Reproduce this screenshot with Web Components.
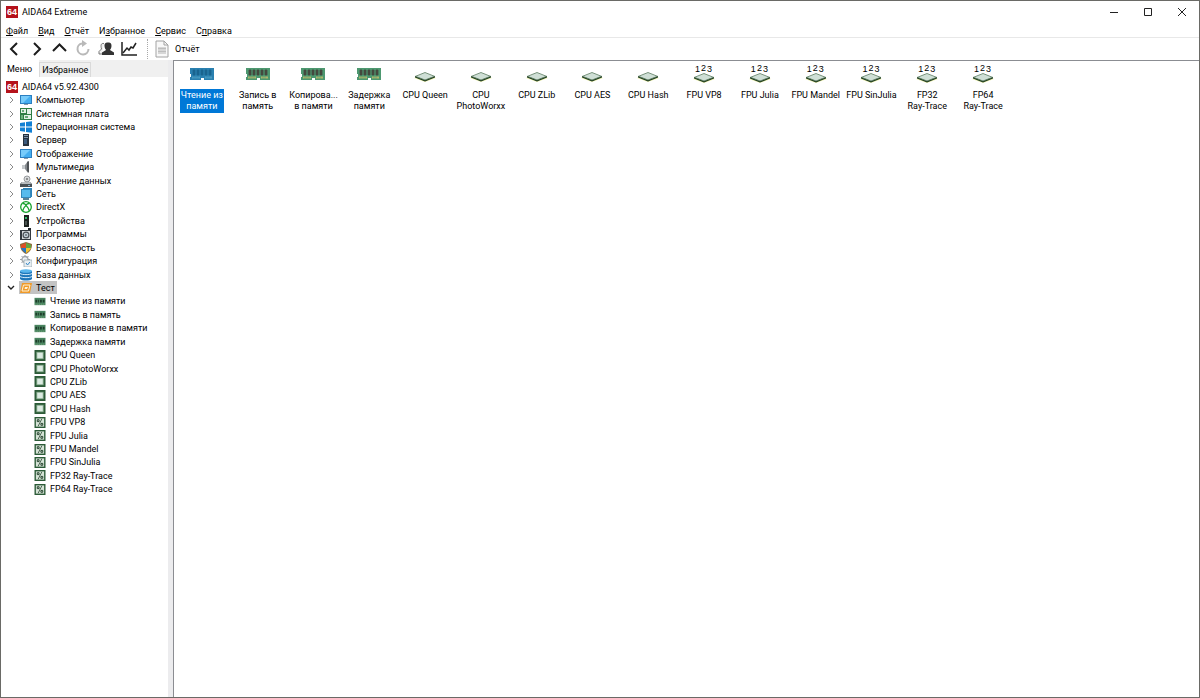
<!DOCTYPE html>
<html lang="ru">
<head>
<meta charset="utf-8">
<title>AIDA64 Extreme</title>
<style>
  html, body { height: 100%; margin: 0; }
  body { font: 9px/12px Roboto, "Open Sans", sans-serif; color: #000; background: #fff; }
</style>
</head>
<body>
<app-window></app-window>

<script>
const RAM = (board, chip, pin) => `
  <path d="M1 2H25V14H15V12H12V14H1V11H2V8H1Z" fill="${board}"/>
  <path d="M4 4h2v5H4zM8 4h2v5H8zM12 4h2v5h-2zM16 4h2v5h-2zM20 4h2v5h-2z" fill="${chip}" stroke="${chip}" stroke-width=".8"/>
  <path d="M3 10.500h8v2H3zM16 10.500h7v2h-7z" fill="${pin}"/>
  <path d="M5 10v3M7 10v3M9 10v3M18 10v3M20 10v3" stroke="${board}" stroke-width=".5"/>`;
const CHIP = `
  <path d="M2 12 13 7l11 5-11 4z" fill="#f0f2b4"/>
  <path d="M3 10v1.500l10 4 10-4V10z" fill="#1d3a1c"/>
  <path d="M3.500 10.300 13 6.500l9.500 3.800L13 14z" fill="#cfdfd6" stroke="#5d7c62" stroke-width=".8"/>`;

const ICONS = {
  logo: ["0 0 12 12", `<rect width="12" height="12" fill="#b5121b"/><text x="6" y="9" text-anchor="middle" font-family="Liberation Sans, sans-serif" font-size="9" font-weight="bold" fill="#fff">64</text>`],
  monitor: ["0 0 12 12", `<rect y="1" width="12" height="9" fill="#2b7fc1"/><path d="M1 2h10v7H1z" fill="#45aef0"/><path d="M1 2h9L3 9H1z" fill="#78cbfa"/><path d="M4 10h4v1H4z" fill="#8a9aa6"/>`],
  board: ["0 0 12 12", `<rect width="12" height="12" fill="#2f7d43"/><path d="M1 1h5v4H1zM7 1h4v5H7zM4 7h7v4H4z" fill="#e4f1e6"/><path d="M2 2h2v2H2zM5 8h3v2H5z" fill="#69a977"/><path d="M1 7h2v4H1z" fill="#6db17b"/>`],
  windows: ["0 0 12 12", `<path d="M0 2 5 1.300V5.600H0zM6 1.100 12 .3V5.600H6zM0 6.500H5v4.300L0 10zM6 6.500h6v5.300l-6-.8z" fill="#1280d4"/>`],
  server: ["0 0 12 12", `<path d="M3 0h6v12H3z" fill="#26323f"/><path d="M4 1h4v1H4zM4 3h4v1H4z" fill="#7d93ab"/><path d="M4 5h3v5H4z" fill="#3c5a7d"/>`],
  sound: ["0 0 12 12", `<path d="M2 4h3l3-4v12L5 8H2z" fill="#85898d"/><path d="M2 4h3v4H2z" fill="#c4c8cb"/><path d="M7 1l2-1v12l-2-2z" fill="#4e5256"/>`],
  disk: ["0 0 12 12", `<path d="M2 7h8l2 2v3H0V9z" fill="#4b5054"/><path d="M2 7h8l1 2H1z" fill="#b9bdc0"/><circle cx="7" cy="4" r="3" fill="#d8dadc" stroke="#96999c"/><circle cx="7" cy="4" r="1" fill="#777"/><path d="M8 10h2v1H8z" fill="#8ab8d8"/>`],
  network: ["0 0 12 12", `<path d="M3 0h9v9H3z" fill="#2a83bb"/><path d="M1 1h10v9H1z" fill="#3688b9"/><path d="M2 2h8v7H2z" fill="#57bbed"/><path d="M3 10h6v2H3z" fill="#5b8395"/>`],
  xbox: ["0 0 12 12", `<circle cx="6" cy="6" r="5.300" fill="#fff" stroke="#18a22d" stroke-width="1.300"/><path d="M2.500 10C3.200 7.500 4.500 5.500 6 4.400 7.500 5.500 8.800 7.500 9.500 10M3 2.500C4.500 2.500 5.500 3.500 6 4.200 6.500 3.500 7.500 2.500 9 2.500" fill="none" stroke="#18a22d" stroke-width="1.300"/>`],
  device: ["0 0 12 12", `<path d="M4 0h5v12H4z" fill="#1c211e"/><path d="M5 2h2v2H5z" fill="#35b96a"/><path d="M5 6h2v4H5z" fill="#4a5450"/>`],
  programs: ["0 0 12 12", `<path d="M0 2h11v10H0z" fill="#343a40"/><path d="M2 3h8v8H2z" fill="#d6dadd"/><circle cx="6" cy="7" r="3.500" fill="#4a5056"/><circle cx="6" cy="7" r="2.300" fill="#c5d1d8"/><circle cx="6" cy="7" r=".8" fill="#2f3439"/><path d="M8 0h3v2H8z" fill="#22272b"/>`],
  shield: ["0 0 12 12", `<path d="M6 0 12 2C12 7 10 10 6 12 2 10 0 7 0 2z" fill="#8e6b3a"/><path d="M6 1V6H1V3z" fill="#de4f26"/><path d="M6 1 11 3V6H6z" fill="#61a842"/><path d="M1 6H6V11C3 9 2 8 1 6z" fill="#2777c3"/><path d="M6 6H11C10 8 9 9 6 11z" fill="#f3c431"/>`],
  config: ["0 0 12 12", `<circle cx="5" cy="4.500" r="3" fill="#eef1f3" stroke="#a3a8ac" stroke-width="1.300"/><path d="M5 0v2M5 7v2M0 4.500h2M8 4.500h2M1.500 1l1.500 1.500M7 2.500 8.500 1M1.500 8 3 6.500" stroke="#9ba1a6"/><path d="M4 5h8v7H4z" fill="#e8eef2" stroke="#91a0ab" stroke-width=".7"/><path d="M6 8l1.500 2L10 7" fill="none" stroke="#3688c6"/>`],
  database: ["0 0 12 12", `<path d="M0 2h12v8c-2 2-10 2-12 0z" fill="#1e76ba"/><ellipse cx="6" cy="2" rx="6" ry="1.800" fill="#57b5ed"/><path d="M0 4.500c2 1.500 10 1.500 12 0M0 7.500c2 1.500 10 1.500 12 0" fill="none" stroke="#d2eafa"/>`],
  test: ["0 0 12 12", `<path d="M2 1h10l-2 10H0z" fill="#f09a28"/><path d="M3.500 3h6.500L8.500 9H2z" fill="none" stroke="#fff2d6"/><path d="M5 5h3L7 7H4.500z" fill="#fff2d6"/>`],
  ram: ["0 0 12 12", `<path d="M0 2h12v8H0z" fill="#4a8560"/><path d="M1 4h2v3H1zM4 4h1v3H4zM6 4h2v3H6zM9 4h2v3H9z" fill="#1e3c29"/><path d="M1 9h10" stroke="#7aa67f" stroke-dasharray="1"/>`],
  cpu: ["0 0 12 12", `<path d="M0 0h12v12H0z" fill="#2c5b38"/><path d="M2 2h8v8H2z" fill="#86ab8e"/><path d="M3 3h6v6H3z" fill="#dcebe2"/>`],
  fpu: ["0 0 12 12", `<path d="M0 0h12v12H0z" fill="#2c5b38"/><path d="M1.500 1.500h9v9h-9z" fill="#d5e3d6"/><path d="M4 10 8 2" stroke="#1b3a24" stroke-width=".8"/><path d="M3 3h2v2H3zM7 7h2v2H7z" fill="none" stroke="#1b3a24"/>`],
  ramSelected: ["0 0 26 16", RAM("#2a80b0", "#1a648f", "#4b9bc0")],
  ramBig: ["0 0 26 16", RAM("#4d9870", "#45493f", "#b0b569")],
  cpuBig: ["0 0 26 16", CHIP],
  back: ["0 0 18 18", `<path d="M12 3 6 9l6 6" fill="none" stroke="#1c1c1c" stroke-width="2"/>`],
  forward: ["0 0 18 18", `<path d="M6 3l6 6-6 6" fill="none" stroke="#1c1c1c" stroke-width="2"/>`],
  up: ["0 0 18 18", `<path d="M2 11 8.500 4.500 15 11" fill="none" stroke="#1c1c1c" stroke-width="2"/>`],
  refresh: ["0 0 18 18", `<path d="M8 3.500A5.500 5.500 0 1 0 14.500 9" fill="none" stroke="#b9b9b9" stroke-width="2"/><path d="M8 0v7l5-3.500z" fill="#b9b9b9"/>`],
  users: ["0 0 18 18", `<path d="M7 3.500C4 3 3.500 5 4.500 9L2 11.500V14H5" fill="#eee" stroke="#777"/><path d="M11 2.500C8 2.500 7.500 4 7.500 6C7.500 8 8.500 9 9 10L5 12.500V15H17V12.500L13 10C13.500 9 14.500 8 14.500 6C14.500 4 14 2.500 11 2.500z" fill="#333"/>`],
  chart: ["0 0 18 18", `<path d="M2 2V15H17" fill="none" stroke="#222" stroke-width="1.500"/><path d="M3 13 7 8l2 2 2-3 2 1 3-5" fill="none" stroke="#222" stroke-width="1.500"/>`],
  page: ["0 0 18 18", `<path d="M3 1h8l4 4v12H3z" fill="#f8f8f8" stroke="#a2a2a2"/><path d="M11 1v4h4" fill="none" stroke="#a2a2a2"/><path d="M5 7h8v7H5z" fill="#d6d6d6"/><path d="M5 8.500h8M5 11.500h8" stroke="#bdbdbd"/>`],
  minimize: ["0 0 10 10", `<path d="M1 5.500h8" stroke="#222"/>`],
  maximize: ["0 0 10 10", `<path d="M1.500 1.500h7v7h-7z" fill="none" stroke="#222"/>`],
  close: ["0 0 10 10", `<path d="M1 1l8 8M9 1 1 9" stroke="#222"/>`],
  closed: ["0 0 8 8", `<path d="M3 1l3 3-3 3" fill="none" stroke="#8a8a8a"/>`],
  open: ["0 0 8 8", `<path d="M1 2l3 3 3-3" fill="none" stroke="#222" stroke-width="1.400"/>`]
};

class ShadowElement extends HTMLElement {
  connectedCallback() {
    if (this.shadowRoot) return;
    this.attachShadow({ mode: "open" }).innerHTML = this.render();
  }
}

customElements.define("app-icon", class extends ShadowElement {
  render() {
    const [box, shapes] = ICONS[this.getAttribute("name")];
    return `<style>
      :host { display: block; flex: none; width: 12px; height: 12px; }
      svg { display: block; width: 100%; height: 100%; }
    </style><svg viewBox="${box}" aria-hidden="true">${shapes}</svg>`;
  }
});

customElements.define("title-bar", class extends ShadowElement {
  render() {
    return `<style>
      :host { display: flex; align-items: center; height: 22px; padding-left: 5px; }
      h1 { flex: 1; margin: 0 4px; font: inherit; }
      button { display: grid; place-items: center; width: 34px; height: 22px; border: 0; padding: 0; background: none; }
      button app-icon { width: 10px; height: 10px; }
    </style>
    <app-icon name="logo"></app-icon><h1><slot></slot></h1>
    <button aria-label="Свернуть"><app-icon name="minimize"></app-icon></button>
    <button aria-label="Развернуть"><app-icon name="maximize"></app-icon></button>
    <button aria-label="Закрыть"><app-icon name="close"></app-icon></button>`;
  }
});

customElements.define("menu-bar", class extends ShadowElement {
  render() {
    const items = ["<u>Ф</u>айл", "<u>В</u>ид", "<u>О</u>тчёт", "И<u>з</u>бранное", "<u>С</u>ервис", "С<u>п</u>равка"];
    return `<style>
      :host { display: block; }
      nav { display: flex; align-items: flex-end; gap: 10px; height: 14px; padding-left: 5px; border-bottom: 1px solid #e8e8e8; }
      button { border: 0; padding: 0; background: none; font: inherit; color: inherit; }
    </style><nav>${items.map(t => `<button>${t}</button>`).join("")}</nav>`;
  }
});

customElements.define("tool-bar", class extends ShadowElement {
  render() {
    const tools = [["back", "Назад"], ["forward", "Вперёд"], ["up", "Вверх"], ["refresh", "Обновить"], ["users", "Пользователи"], ["chart", "График"]];
    return `<style>
      :host { display: flex; align-items: center; height: 22px; padding-left: 1px; }
      button { display: flex; align-items: center; justify-content: center; gap: 4px; width: 23px; border: 0; padding: 0; background: none; font: inherit; color: inherit; }
      app-icon { width: 18px; height: 18px; }
      .rule { height: 20px; margin: 0 5px 0 7px; border-left: 1px dotted #a8a8a8; }
      .report { width: auto; }
    </style>
    ${tools.map(([i, t]) => `<button aria-label="${t}"><app-icon name="${i}"></app-icon></button>`).join("")}
    <span class="rule"></span>
    <button class="report"><app-icon name="page"></app-icon>Отчёт</button>`;
  }
});

customElements.define("tree-row", class extends ShadowElement {
  render() {
    const state = this.getAttribute("state");
    return `<style>
      :host { display: flex; align-items: center; min-height: 0; padding-left: 4px; white-space: nowrap; }
      :host([state]) { padding-left: 6px; }
      :host([leaf]) { padding-left: 32px; }
      button { display: block; flex: none; width: 8px; height: 8px; margin-right: 4px; border: 0; padding: 0; background: none; }
      button app-icon { width: 8px; height: 8px; }
      .item { display: flex; align-items: center; height: 13px; gap: 4px; padding: 0 2px 0 1px; }
      :host([selected]) .item { background: #c3c3c3; }
      :host([leaf]) .item app-icon { height: 11px; }
    </style>
    ${state ? `<button aria-label="Развернуть"><app-icon name="${state}"></app-icon></button>` : ""}
    <span class="item"><app-icon name="${this.getAttribute("icon")}"></app-icon><slot></slot></span>`;
  }
});

customElements.define("side-panel", class extends ShadowElement {
  render() {
    const groups = [["monitor", "Компьютер"], ["board", "Системная плата"], ["windows", "Операционная система"], ["server", "Сервер"], ["monitor", "Отображение"], ["sound", "Мультимедиа"], ["disk", "Хранение данных"], ["network", "Сеть"], ["xbox", "DirectX"], ["device", "Устройства"], ["programs", "Программы"], ["shield", "Безопасность"], ["config", "Конфигурация"], ["database", "База данных"]];
    const leaves = [["ram", "Чтение из памяти"], ["ram", "Запись в память"], ["ram", "Копирование в памяти"], ["ram", "Задержка памяти"], ["cpu", "CPU Queen"], ["cpu", "CPU PhotoWorxx"], ["cpu", "CPU ZLib"], ["cpu", "CPU AES"], ["cpu", "CPU Hash"], ["fpu", "FPU VP8"], ["fpu", "FPU Julia"], ["fpu", "FPU Mandel"], ["fpu", "FPU SinJulia"], ["fpu", "FP32 Ray-Trace"], ["fpu", "FP64 Ray-Trace"]];
    return `<style>
      :host { display: flex; flex-direction: column; background: #fff; }
      .tabs { display: flex; align-items: flex-end; height: 17px; background: #f0f0f0; }
      .tabs button { height: 15px; border: 1px solid #dadada; border-bottom: 0; padding: 0 2px; background: #f0f0f0; font: inherit; color: inherit; }
      .tabs button[aria-selected=true] { height: 17px; padding: 0 6px 1px 5px; border-color: #fff; background: #fff; }
      .tree { display: grid; grid-auto-rows: 1fr; height: 416px; margin-top: 3px; }
    </style>
    <div class="tabs" role="tablist"><button role="tab" aria-selected="true">Меню</button><button role="tab" aria-selected="false">Избранное</button></div>
    <div class="tree">
      <tree-row icon="logo">AIDA64 v5.92.4300</tree-row>
      ${groups.map(([i, t]) => `<tree-row state="closed" icon="${i}">${t}</tree-row>`).join("")}
      <tree-row state="open" icon="test" selected>Тест</tree-row>
      ${leaves.map(([i, t]) => `<tree-row leaf icon="${i}">${t}</tree-row>`).join("")}
    </div>`;
  }
});

customElements.define("test-tile", class extends ShadowElement {
  render() {
    return `<style>
      :host { display: flex; flex-direction: column; align-items: center; text-align: center; line-height: 11px; white-space: nowrap; }
      .picture { position: relative; display: flex; height: 26px; padding-top: 3px; box-sizing: border-box; }
      .picture app-icon { width: 26px; height: 16px; }
      .digits { position: absolute; inset: 2px 0 auto; font: 9px/9px "Liberation Sans", sans-serif; letter-spacing: 1px; }
      .digits span { position: relative; top: -1px; }
      :host([digits]) app-icon { margin-top: 1px; }
      .label { padding: 1px; }
      :host([selected]) .label { background: #0078d7; color: #fff; }
    </style>
    <span class="picture"><app-icon name="${this.getAttribute("icon")}"></app-icon>${this.hasAttribute("digits") ? `<span class="digits">1<span>2</span>3</span>` : ""}</span>
    <span class="label"><slot></slot></span>`;
  }
});

customElements.define("test-list", class extends ShadowElement {
  render() {
    const tiles = [["ramSelected", "Чтение из<br>памяти", "selected"], ["ramBig", "Запись в<br>память"], ["ramBig", "Копирова...<br>в памяти"], ["ramBig", "Задержка<br>памяти"], ["cpuBig", "CPU Queen"], ["cpuBig", "CPU<br>PhotoWorxx"], ["cpuBig", "CPU ZLib"], ["cpuBig", "CPU AES"], ["cpuBig", "CPU Hash"], ["cpuBig", "FPU VP8", "digits"], ["cpuBig", "FPU Julia", "digits"], ["cpuBig", "FPU Mandel", "digits"], ["cpuBig", "FPU SinJulia", "digits"], ["cpuBig", "FP32<br>Ray-Trace", "digits"], ["cpuBig", "FP64<br>Ray-Trace", "digits"]];
    return `<style>
      :host { display: block; background: #fff; border: solid #8b8d92; border-width: 1px 0 0 1px; }
      .grid { display: grid; grid-template-columns: repeat(15, minmax(0, 1fr)); max-width: 837px; padding: 2px 0 0; }
    </style><div class="grid">${tiles.map(([i, t, a = ""]) => `<test-tile icon="${i}" ${a}>${t}</test-tile>`).join("")}</div>`;
  }
});

customElements.define("app-window", class extends ShadowElement {
  render() {
    return `<style>
      :host { display: flex; flex-direction: column; box-sizing: border-box; min-height: 100vh; border: 1px solid #6a6a66; background: #fff; }
      main { display: grid; grid-template-columns: 167px 5px minmax(0, 1fr); flex: 1; }
      .splitter { background: #ececee; }
    </style>
    <title-bar>AIDA64 Extreme</title-bar>
    <menu-bar></menu-bar>
    <tool-bar></tool-bar>
    <main><side-panel></side-panel><div class="splitter"></div><test-list></test-list></main>`;
  }
});
</script>
</body>
</html>
